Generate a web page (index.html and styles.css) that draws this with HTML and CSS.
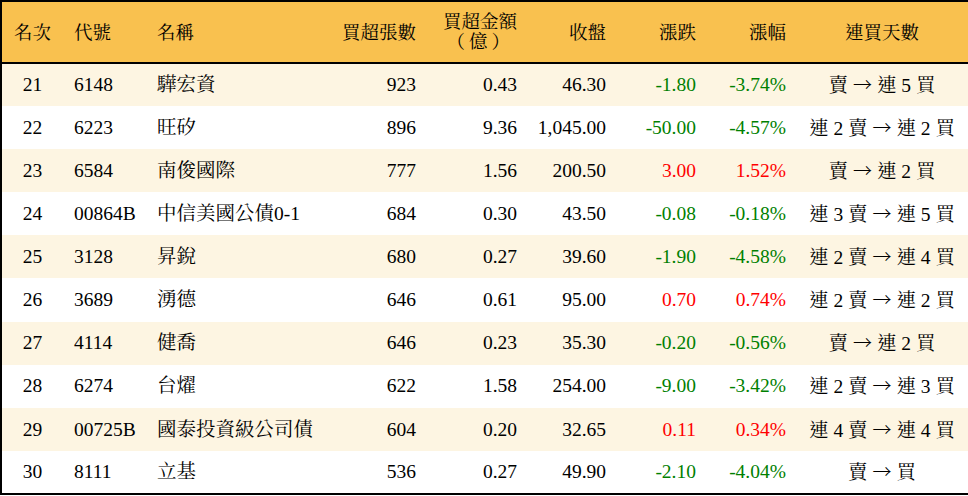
FILE: index.html
```html
<!DOCTYPE html>
<html lang="zh-Hant">
<head>
<meta charset="utf-8">
<title>買超排行</title>
<link rel="stylesheet" href="styles.css">
</head>
<body>
<table class="rank">
  <colgroup>
    <col class="c-rank"><col class="c-code"><col class="c-name"><col class="c-vol"><col class="c-amt"><col class="c-close"><col class="c-chg"><col class="c-pct"><col class="c-days">
  </colgroup>
  <thead>
    <tr>
      <th class="ctr">名次</th>
      <th class="lft">代號</th>
      <th class="lft">名稱</th>
      <th class="rgt">買超張數</th>
      <th class="rgt two"><span class="l1">買超金額</span><span class="l2">（億）</span></th>
      <th class="rgt">收盤</th>
      <th class="rgt">漲跌</th>
      <th class="rgt">漲幅</th>
      <th class="ctr">連買天數</th>
    </tr>
  </thead>
  <tbody>
    <tr class="alt"><td class="ctr">21</td><td class="lft">6148</td><td class="lft">驊宏資</td><td class="rgt">923</td><td class="rgt">0.43</td><td class="rgt">46.30</td><td class="rgt dn">-1.80</td><td class="rgt dn">-3.74%</td><td class="ctr">賣 <span class="ar">→</span> 連 5 買</td></tr>
    <tr><td class="ctr">22</td><td class="lft">6223</td><td class="lft">旺矽</td><td class="rgt">896</td><td class="rgt">9.36</td><td class="rgt">1,045.00</td><td class="rgt dn">-50.00</td><td class="rgt dn">-4.57%</td><td class="ctr">連 2 賣 <span class="ar">→</span> 連 2 買</td></tr>
    <tr class="alt"><td class="ctr">23</td><td class="lft">6584</td><td class="lft">南俊國際</td><td class="rgt">777</td><td class="rgt">1.56</td><td class="rgt">200.50</td><td class="rgt up">3.00</td><td class="rgt up">1.52%</td><td class="ctr">賣 <span class="ar">→</span> 連 2 買</td></tr>
    <tr><td class="ctr">24</td><td class="lft">00864B</td><td class="lft">中信美國公債0-1</td><td class="rgt">684</td><td class="rgt">0.30</td><td class="rgt">43.50</td><td class="rgt dn">-0.08</td><td class="rgt dn">-0.18%</td><td class="ctr">連 3 賣 <span class="ar">→</span> 連 5 買</td></tr>
    <tr class="alt"><td class="ctr">25</td><td class="lft">3128</td><td class="lft">昇銳</td><td class="rgt">680</td><td class="rgt">0.27</td><td class="rgt">39.60</td><td class="rgt dn">-1.90</td><td class="rgt dn">-4.58%</td><td class="ctr">連 2 賣 <span class="ar">→</span> 連 4 買</td></tr>
    <tr><td class="ctr">26</td><td class="lft">3689</td><td class="lft">湧德</td><td class="rgt">646</td><td class="rgt">0.61</td><td class="rgt">95.00</td><td class="rgt up">0.70</td><td class="rgt up">0.74%</td><td class="ctr">連 2 賣 <span class="ar">→</span> 連 2 買</td></tr>
    <tr class="alt"><td class="ctr">27</td><td class="lft">4114</td><td class="lft">健喬</td><td class="rgt">646</td><td class="rgt">0.23</td><td class="rgt">35.30</td><td class="rgt dn">-0.20</td><td class="rgt dn">-0.56%</td><td class="ctr">賣 <span class="ar">→</span> 連 2 買</td></tr>
    <tr><td class="ctr">28</td><td class="lft">6274</td><td class="lft">台燿</td><td class="rgt">622</td><td class="rgt">1.58</td><td class="rgt">254.00</td><td class="rgt dn">-9.00</td><td class="rgt dn">-3.42%</td><td class="ctr">連 2 賣 <span class="ar">→</span> 連 3 買</td></tr>
    <tr class="alt"><td class="ctr">29</td><td class="lft">00725B</td><td class="lft">國泰投資級公司債</td><td class="rgt">604</td><td class="rgt">0.20</td><td class="rgt">32.65</td><td class="rgt up">0.11</td><td class="rgt up">0.34%</td><td class="ctr">連 4 賣 <span class="ar">→</span> 連 4 買</td></tr>
    <tr><td class="ctr">30</td><td class="lft">8111</td><td class="lft">立基</td><td class="rgt">536</td><td class="rgt">0.27</td><td class="rgt">49.90</td><td class="rgt dn">-2.10</td><td class="rgt dn">-4.04%</td><td class="ctr">賣 <span class="ar">→</span> 買</td></tr>
  </tbody>
</table>
</body>
</html>
```
FILE: styles.css
```css
html, body {
  margin: 0;
  padding: 0;
  background: #ffffff;
}

body {
  width: 968px;
  height: 496px;
  overflow: hidden;
  font-family: "Liberation Serif", "Noto Serif CJK TC", "Noto Sans CJK TC", serif;
  color: #000000;
}

.rank {
  width: 968px;
  border-collapse: collapse;
  table-layout: fixed;
  border: 2px solid #000000;
}

.c-rank { width: 62px; }
.c-code { width: 83px; }
.c-name { width: 170px; }
.c-vol { width: 110px; }
.c-amt { width: 101px; }
.c-close { width: 89px; }
.c-chg { width: 90px; }
.c-pct { width: 90px; }
.c-days { width: 173px; }

.rank thead tr {
  background: #f9c14f;
  height: 62px;
  border-bottom: 2px solid #000000;
}

.rank th {
  font-weight: normal;
  font-size: 18.5px;
  line-height: 1;
  padding: 0;
  padding-top: 3px;
  vertical-align: middle;
  white-space: nowrap;
}

.rank th.two {
  padding-top: 0;
}

.l1, .l2 {
  display: block;
  height: 20px;
  line-height: 20px;
  overflow: visible;
}

.l2 {
  letter-spacing: 4px;
  padding-right: 3px;
}

.rank tbody tr {
  height: 43.1px;
  background: #ffffff;
}

.rank tbody tr.alt {
  background: #fdf5e2;
}

.rank td {
  font-size: 19.5px;
  line-height: 1;
  padding: 0;
  vertical-align: middle;
  white-space: nowrap;
}

.ar {
  font-family: "Noto Sans CJK TC", "DejaVu Sans", sans-serif;
  font-size: 19px;
  font-weight: 300;
}

.ctr { text-align: center; }
.lft { text-align: left; padding-left: 11px !important; }
.rgt { text-align: right; padding-right: 10px !important; }

.up { color: #ff0000; }
.dn { color: #008000; }
```
